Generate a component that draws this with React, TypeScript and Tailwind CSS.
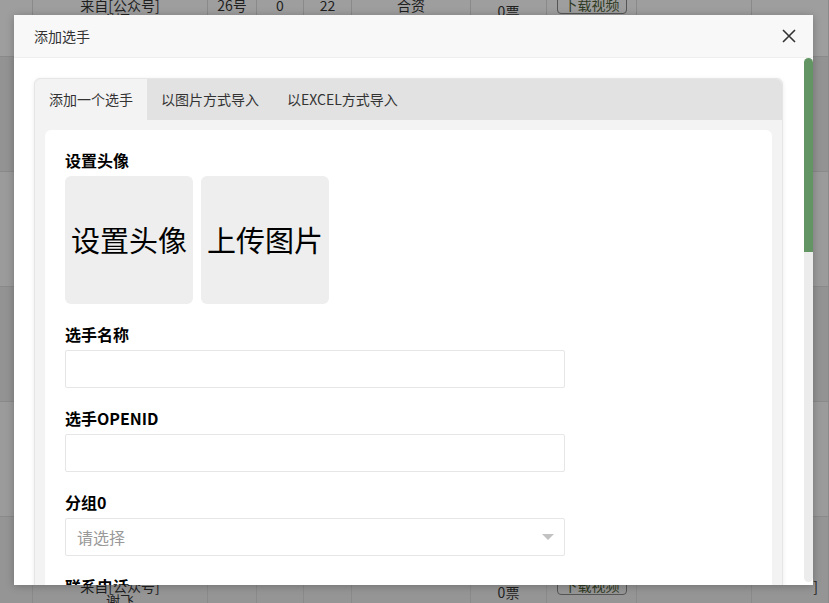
import React from "react";

const cols = [33, 175, 49, 47, 48, 119, 76, 90, 115, 77];

const BgRow = ({ shade, top, bottom }: { shade: string; top?: boolean; bottom?: boolean }) => {
  const show = top || bottom;
  return (
    <div className={`flex h-[115px] shrink-0 border-b border-[#8a8a8a] ${shade}`}>
      {cols.map((w, i) => (
        <div
          key={i}
          style={{ width: w }}
          className={`flex shrink-0 flex-col items-center border-r border-[#8a8a8a] text-[14px] leading-[14px] text-[#1f1f1f] ${
            bottom ? "pt-[62px]" : "pt-[56px]"
          }`}
        >
          {show && i === 1 && (
            <>
              <p>来自[公众号]</p>
              <p>谢飞</p>
            </>
          )}
          {top && i === 2 && <p>26号</p>}
          {top && i === 3 && <p>0</p>}
          {top && i === 4 && <p>22</p>}
          {top && i === 5 && <p>合资</p>}
          {show && i === 6 && <p className="pt-[6px]">0票</p>}
          {show && i === 7 && (
            <span className="mt-[-4px] rounded-[4px] border border-[#555] px-[6px] py-[1px] text-[14px] leading-[16px] text-[#2f3a22]">
              下载视频
            </span>
          )}
          {bottom && i === 9 && <p className="self-end pr-[10px]">]</p>}
        </div>
      ))}
    </div>
  );
};

const Field = ({ label, children }: { label: string; children: React.ReactNode }) => (
  <div className="mt-[18px] flex flex-col gap-1">
    <p className="h-6 text-[16px] leading-6 font-bold text-black">{label}</p>
    {children}
  </div>
);

const App = () => {
  return (
    <div className="relative h-[603px] w-[829px] overflow-hidden bg-[#969696] font-['Noto_Sans_CJK_SC',sans-serif]">
      {/* backdrop table */}
      <div className="mt-[-58px] flex flex-col">
        <BgRow shade="bg-[#9e9e9e]" top />
        <BgRow shade="bg-[#939393]" />
        <BgRow shade="bg-[#9b9b9b]" />
        <BgRow shade="bg-[#939393]" />
        <BgRow shade="bg-[#9b9b9b]" />
        <BgRow shade="bg-[#959595]" bottom />
      </div>

      {/* modal */}
      <div className="absolute left-[14px] top-[15px] flex h-[570px] w-[799px] flex-col bg-white shadow-[0_1px_8px_rgba(0,0,0,0.25)]">
        <div className="flex h-[43px] shrink-0 items-center justify-between border-b border-[#eee] bg-[#f8f8f8] pl-5 pr-[16px]">
          <p className="text-[14px] text-[#333]">添加选手</p>
          <svg width="14" height="14" viewBox="0 0 14 14" className="mr-[1px]">
            <path d="M1 1 L13 13 M13 1 L1 13" stroke="#333" strokeWidth="1.6" />
          </svg>
        </div>

        <div className="flex min-h-0 flex-1">
          {/* scroll content */}
          <div className="min-w-0 flex-1 overflow-hidden pl-5 pr-[21px] pt-5">
            <div className="rounded-t-[6px] border border-[#e6e6e6] bg-[#f3f3f3] shadow-[0_1px_4px_rgba(0,0,0,0.08)]">
              <div className="flex h-[41px] rounded-t-[6px] bg-[#e2e2e2] text-[14px] text-[#333]">
                <div className="flex items-center rounded-tl-[6px] bg-[#f3f3f3] px-[14px]">添加一个选手</div>
                <div className="flex items-center px-[14px]">以图片方式导入</div>
                <div className="flex items-center px-[14px]">以EXCEL方式导入</div>
              </div>
              <div className="px-[10px] pt-[10px]">
                <div className="flex h-[600px] flex-col rounded-[6px] bg-white px-5">
                  <Field label="设置头像">
                    <div className="flex gap-2">
                      <div className="flex h-[128px] w-[128px] items-center justify-center rounded-[6px] bg-[#eee] text-[29px] text-black">
                        设置头像
                      </div>
                      <div className="flex h-[128px] w-[128px] items-center justify-center rounded-[6px] bg-[#eee] text-[29px] text-black">
                        上传图片
                      </div>
                    </div>
                  </Field>
                  <Field label="选手名称">
                    <div className="h-[38px] w-[500px] rounded-[2px] border border-[#e6e6e6] bg-white" />
                  </Field>
                  <Field label="选手OPENID">
                    <div className="h-[38px] w-[500px] rounded-[2px] border border-[#e6e6e6] bg-white" />
                  </Field>
                  <Field label="分组0">
                    <div className="flex h-[38px] w-[500px] items-center justify-between rounded-[2px] border border-[#e6e6e6] bg-white pl-[11px] pr-[10px]">
                      <span className="text-[16px] text-[#999]">请选择</span>
                      <svg width="12" height="7" viewBox="0 0 12 7">
                        <path d="M0 0 L12 0 L6 6 Z" fill="#c2c2c2" />
                      </svg>
                    </div>
                  </Field>
                  <Field label="联系电话">
                    <div className="h-[38px] w-[500px] rounded-[2px] border border-[#e6e6e6] bg-white" />
                  </Field>
                </div>
              </div>
            </div>
          </div>

          {/* scrollbar */}
          <div className="flex w-[9px] shrink-0 flex-col pb-[3px]">
            <div className="h-[200px] rounded-full bg-[#629563]" />
            <div className="mt-[-6px] flex-1 rounded-b-full bg-[#ececec]" />
          </div>
        </div>
      </div>
    </div>
  );
};

export default App;
